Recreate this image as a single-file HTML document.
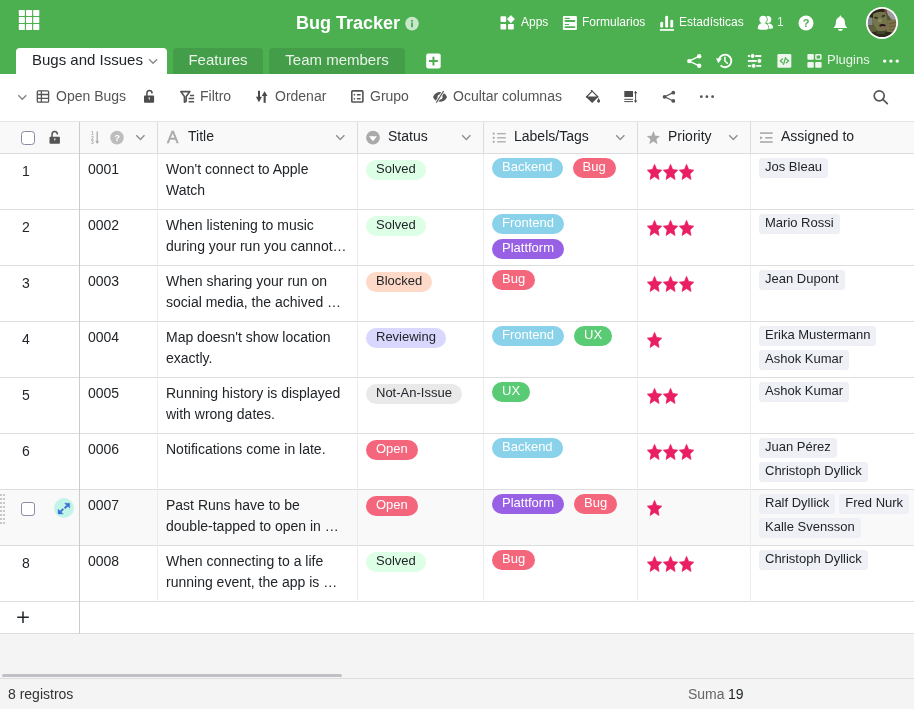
<!DOCTYPE html>
<html lang="es"><head><meta charset="utf-8"><title>Bug Tracker</title>
<style>
*{box-sizing:border-box;margin:0;padding:0}
html,body{width:914px;height:709px;overflow:hidden;background:#fff}
body{font-family:"Liberation Sans",Arial,sans-serif;color:#212529;font-size:14px;position:relative;will-change:transform}
.abs{position:absolute}
#hdr{position:absolute;left:0;top:0;width:914px;height:74px;background:#4caf50;color:#fff}
#hdr .t{position:absolute;white-space:nowrap;color:#fff}
#title{font-weight:bold;font-size:18px;left:296px;top:13px;line-height:21px}
.nav{font-size:12px;line-height:14px;top:15px}
.tab{position:absolute;top:48px;height:26px;border-radius:4px 4px 0 0;font-size:15px;line-height:17px;padding-top:3px;white-space:nowrap}
.tab.on{background:#fff;color:#212529;left:16px;width:151px;padding-left:16px}
.tab.off{background:#449d48;color:rgba(255,255,255,.88);text-align:center}
#tb{position:absolute;left:0;top:74px;width:914px;height:47px;background:#fff}
#tb .t{position:absolute;top:14px;font-size:14px;line-height:16px;color:#555;white-space:nowrap}
svg{position:absolute;overflow:visible}
svg.ov{left:0;top:0;pointer-events:none}
#grid{position:absolute;left:0;top:121px;width:914px;height:557px;background:#f4f4f4}
#gh{position:absolute;left:0;top:0;width:914px;height:33px;background:#f9f9f9;border-top:1px solid #e4e6e9;border-bottom:1px solid #ddd}
.hl{position:absolute;top:6px;font-size:14px;line-height:16px;color:#212529;white-space:nowrap}
.row{position:absolute;left:0;width:914px;height:56px;background:#fff;border-bottom:1px solid #ddd}
.row.hov{background:#f9f9f9}
.vl{position:absolute;width:1px;background:linear-gradient(#dcdcdc 0 32px,#ececec 32px)}
.num{position:absolute;left:22px;top:9px;font-size:14px;line-height:16px}
.id{position:absolute;left:88px;top:5px;font-size:14px;line-height:21px}
.ti{position:absolute;left:166px;top:5px;width:184px;font-size:14px;line-height:21px;white-space:nowrap}
.pill{display:inline-block;height:20px;border-radius:10px;font-size:13px;line-height:19px;padding:0 10px;white-space:nowrap;color:#fff;vertical-align:top}
.st{position:absolute;left:366px;top:6px;color:#212529;line-height:17px}
.lb{margin-right:10px;line-height:17px}
.ln{position:absolute;white-space:nowrap;height:20px;font-size:0}
.chip{display:inline-block;height:20px;border-radius:3px;background:#eef0f5;font-size:13px;line-height:18px;padding:0 6px;margin-right:4px;white-space:nowrap;color:#212529;vertical-align:top}
.star{fill:#e91e63;stroke:#e91e63;stroke-width:.8;stroke-linejoin:round}
.cb{position:absolute;width:14px;height:14px;border:1px solid #8a8ea6;border-radius:3px;background:#fff}
.exp{position:absolute;left:54px;top:8px;width:20px;height:20px;border-radius:10px;background:#c2f4e8}
.drag{position:absolute;left:0;top:4px;width:5px;height:30px;background:linear-gradient(#c8c8c8,#c8c8c8) 0 0/2px 100% no-repeat,linear-gradient(#c8c8c8,#c8c8c8) 3px 0/2px 100% no-repeat;-webkit-mask:repeating-linear-gradient(#000 0 2px,transparent 2px 4px);mask:repeating-linear-gradient(#000 0 2px,transparent 2px 4px)}
#add{position:absolute;left:0;top:481px;width:914px;height:32px;background:#fff;border-bottom:1px solid #ddd}
#sb{position:absolute;left:2px;top:553px;width:340px;height:3px;border-radius:2px;background:#bfc1c4}
#ft{position:absolute;left:0;top:678px;width:914px;height:31px;background:#f4f4f4;border-top:1px solid #ddd;font-size:14px}
</style></head><body>
<div id="hdr">
<div class="t" id="title">Bug Tracker</div>
<div class="t nav" style="left:521px">Apps</div>
<div class="t nav" style="left:582px">Formularios</div>
<div class="t nav" style="left:679px">Estadísticas</div>
<div class="t nav" style="left:777px;color:rgba(255,255,255,.85)">1</div>
<div class="tab on">Bugs and Issues</div>
<div class="tab off" style="left:173px;width:90px">Features</div>
<div class="tab off" style="left:269px;width:136px">Team members</div>
<div class="t" style="left:827px;top:52px;font-size:13px;line-height:15px;color:rgba(255,255,255,.88)">Plugins</div>
<svg class="ov" width="914" height="74" viewBox="0 0 914 74">
<g fill="#fff">
<rect x="18.8" y="9.9" width="6.1" height="6" rx=".7"/><rect x="26" y="9.9" width="6.1" height="6" rx=".7"/><rect x="33.2" y="9.9" width="6.1" height="6" rx=".7"/>
<rect x="18.8" y="17" width="6.1" height="6" rx=".7"/><rect x="26" y="17" width="6.1" height="6" rx=".7"/><rect x="33.2" y="17" width="6.1" height="6" rx=".7"/>
<rect x="18.8" y="24.1" width="6.1" height="6" rx=".7"/><rect x="26" y="24.1" width="6.1" height="6" rx=".7"/><rect x="33.2" y="24.1" width="6.1" height="6" rx=".7"/>
</g>
<circle cx="412" cy="23.6" r="6.8" fill="rgba(255,255,255,.7)"/>
<rect x="411" y="20" width="2" height="1.7" fill="#4caf50"/><rect x="411" y="22.6" width="2" height="4.6" fill="#4caf50"/>
<g fill="#fff">
<rect x="500.5" y="16.2" width="5.7" height="5.7" rx=".8"/><rect x="500.5" y="23.9" width="5.7" height="5.6" rx=".8"/><rect x="508" y="23.9" width="5.8" height="5.6" rx=".8"/>
<path d="M510.9 15.4 L514.5 19.1 L510.9 22.9 L507.3 19.1 Z" stroke="#fff" stroke-width=".6" stroke-linejoin="round"/>
<rect x="562.9" y="16" width="14" height="14" rx="1"/>
</g>
<g stroke="#4caf50" stroke-linecap="round" fill="none">
<path d="M565.2 18.4 H569.2" stroke-width="1.1"/><path d="M565.4 21 H574.4" stroke-width="1.8"/>
<path d="M565.2 24.5 H568.6" stroke-width="1"/><path d="M565.4 27.1 H574.4" stroke-width="1.9"/>
</g>
<g stroke="#fff" stroke-linecap="round" stroke-width="2.9" fill="none">
<path d="M661.7 23.2 V26.2"/><path d="M666.65 17.3 V26.2"/><path d="M671.75 21.1 V26.2"/>
</g>
<rect x="659.9" y="29.1" width="14.1" height="1.7" fill="#fff"/>
<g fill="#fff">
<circle cx="767.8" cy="19.4" r="3.5"/>
<path d="M766 29 V27 C766 25 767 23.6 768.6 23.6 C771.2 23.6 773.2 25.3 773.2 28.2 Q771 29.2 766 29 Z"/>
<circle cx="763.1" cy="19.4" r="4.6" fill="#4caf50"/>
<path d="M757 30.4 C756.6 25 759 22.3 763.1 22.3 C767.2 22.3 769.6 25 769.2 30.4 Z" fill="#4caf50"/>
<circle cx="763.1" cy="19.4" r="3.7"/>
<path d="M757.7 28.9 C757.7 25.2 759.8 23.1 763.1 23.1 C766.4 23.1 768.5 25.2 768.5 28.9 Q763.1 30.6 757.7 28.9 Z"/>
<circle cx="806" cy="22.95" r="7.5"/>
</g>
<text x="806.1" y="27.1" text-anchor="middle" font-family="Liberation Sans, Arial, sans-serif" font-weight="bold" font-size="11" fill="#4caf50">?</text>
<g fill="#fff">
<path d="M839.5 16.5 a.9 .9 0 0 1 1.8 0 v.4 C843.6 17.6 844.9 19.7 844.9 22.3 C844.9 24.9 845.6 26.2 847 27.4 V28 H833.8 V27.4 C835.2 26.2 835.9 24.9 835.9 22.3 C835.9 19.7 837.2 17.6 839.5 16.9 Z"/>
<path d="M838 28.9 H842.8 A2.4 2.1 0 0 1 838 28.9 Z"/>
<circle cx="882" cy="22.9" r="16"/>
</g>
<clipPath id="avc"><circle cx="882" cy="22.9" r="14.2"/></clipPath>
<filter id="bl" x="-30%" y="-30%" width="160%" height="160%"><feGaussianBlur stdDeviation=".6"/></filter>
<g clip-path="url(#avc)"><g filter="url(#bl)">
<rect x="862" y="3" width="40" height="40" fill="#55563a"/>
<path d="M885 6 H900 V21 L892 20 L888 15 Z" fill="#9c9c9f"/>
<path d="M864 15 L872.5 15 L872.5 25 L864 27 Z" fill="#85868a"/>
<path d="M869 17 Q872 9 886 8.5 L886.5 11.5 Q877 11.5 873 18 Z" fill="#2a241e"/>
<path d="M884.3 9 L886.6 9 L887.2 16 L885 15 Z" fill="#7a4a40"/>
<path d="M873 14 Q879 10.5 885.5 12.5 L888 22 L886.5 30 Q880 34 875 29 L872.8 22 Z" fill="#74744b"/>
<ellipse cx="880" cy="20.5" rx="2.2" ry="2" fill="#8a8a5e"/>
<ellipse cx="876" cy="17.8" rx="2" ry="1" fill="#37331f" transform="rotate(12 876 17.8)"/><ellipse cx="883.4" cy="16" rx="1.9" ry="1" fill="#37331f" transform="rotate(-20 883.4 16)"/>
<ellipse cx="882.5" cy="25.6" rx="3.1" ry="1.5" fill="#1f1514"/><ellipse cx="882.7" cy="27" rx="2.4" ry=".9" fill="#94605e"/>
<path d="M888 20.5 Q893 18.5 898 21 V34 L888 34 L886.5 29 Z" fill="#7b7149"/>
<path d="M889 24 L897 22 M889 27 L897 25.5 M889.5 30 L896 29" stroke="#5a5434" stroke-width=".8" fill="none"/>
<path d="M866 26 Q872 23.5 876 28 L879 34 H866 Z" fill="#5d5f3c"/>
<path d="M866 33 Q882 30 898 33.5 V40 H866 Z" fill="#2d2c1c"/>
<path d="M876 30 Q881 33 886 30 L885 34 H877 Z" fill="#45452c"/>
</g></g>
<g fill="#fff" stroke="#fff">
<path d="M689.1 61.1 L699.3 56.2 M689.1 61.1 L699.3 65.8" stroke-width="1.3" fill="none"/>
<circle cx="689.3" cy="61.1" r="2.2" stroke="none"/><circle cx="699.2" cy="56.3" r="2.2" stroke="none"/><circle cx="699.2" cy="65.8" r="2.2" stroke="none"/>
</g>
<g fill="none" stroke="#fff" stroke-width="1.9">
<path d="M719.1 58.9 A6.3 6.3 0 1 1 720.6 65.4"/>
<path d="M724.9 57.2 V61 L727.3 63.2" stroke-width="1.5" stroke-linecap="round"/>
</g>
<path d="M716 58.2 L721.9 58.6 L718.3 63.2 Z" fill="#fff"/>
<g stroke="#fff" stroke-width="1.9" fill="none">
<path d="M747.9 56 H751 M754 56 H761.3"/><path d="M747.9 60.95 H758"/><path d="M747.9 65.9 H752 M755 65.9 H761.3"/>
</g>
<g fill="#fff" stroke="#4caf50" stroke-width=".9"><circle cx="752.6" cy="56" r="2.4"/><circle cx="759.4" cy="60.95" r="2.4"/><circle cx="753.6" cy="65.9" r="2.4"/></g>
<rect x="777.4" y="54" width="13.9" height="13.8" rx="1.3" fill="rgba(255,255,255,.9)"/>
<g fill="none" stroke="#4caf50" stroke-width="1.2" stroke-linecap="round" stroke-linejoin="round">
<path d="M782.5 59 L780.2 60.9 L782.5 62.8"/><path d="M785.5 57.6 L783.6 64.4"/><path d="M786.4 59 L788.7 60.9 L786.4 62.8"/>
</g>
<g fill="rgba(255,255,255,.9)">
<rect x="807.4" y="54" width="6.4" height="5.8" rx="1"/><rect x="807.4" y="62" width="6.4" height="5.8" rx="1"/><rect x="815.2" y="62" width="6.4" height="5.8" rx="1"/>
<rect x="815.9" y="54.7" width="5" height="4.4" rx=".5" fill="none" stroke="rgba(255,255,255,.9)" stroke-width="1.4"/>
</g>
<g fill="#fff"><circle cx="884.7" cy="61.1" r="1.7"/><circle cx="890.9" cy="61.1" r="1.7"/><circle cx="897.2" cy="61.1" r="1.7"/></g>
<path d="M149.1 59.3 L153.1 63.3 L157.1 59.3" fill="none" stroke="#8a8a8a" stroke-width="1.4"/>
<rect x="426.2" y="53.6" width="14.5" height="15" rx="2" fill="#fff"/>
<path d="M433.45 56.7 V65.5 M429 61.1 H437.9" stroke="#4caf50" stroke-width="2" fill="none"/>

</svg>
</div>
<div id="tb">
<div class="t" style="left:56px">Open Bugs</div>
<div class="t" style="left:200px">Filtro</div>
<div class="t" style="left:275px">Ordenar</div>
<div class="t" style="left:370px">Grupo</div>
<div class="t" style="left:453px">Ocultar columnas</div>
<svg class="ov" width="914" height="47" viewBox="0 74 914 47">
<path d="M18.3 95.3 L22.3 99.3 L26.3 95.3" fill="none" stroke="#858585" stroke-width="1.45"/>
<g fill="none" stroke="#555" stroke-width="1.3">
<rect x="37.3" y="90.8" width="11.3" height="11.4" rx="1"/>
<path d="M37.3 94.5 H48.6 M37.3 98.4 H48.6 M41.4 90.8 V102.2"/>
</g>
<g fill="#4d4d4d">
<rect x="144" y="95.6" width="10.1" height="7.2" rx=".8"/>
<path d="M146.9 96 V93.4 A2.6 2.8 0 0 1 152.1 93.4" fill="none" stroke="#4d4d4d" stroke-width="1.5"/>
<path d="M148.4 97.6 H150 L149.3 100.2 Z" fill="#fff"/>
</g>
<g fill="none" stroke="#555" stroke-width="1.6" stroke-linejoin="round">
<path d="M180.8 91.6 H189.9 L186.2 96.4 V101.3 L184.4 102.2 V96.4 Z"/>
<path d="M190 95.5 H194.1 M188.6 98.5 H194.1 M188.6 101.7 H194.1" stroke-width="1.5"/>
</g>
<g fill="#4a4a4a">
<rect x="258" y="90.8" width="2" height="7"/><path d="M255.9 96.8 H262 L258.95 102.2 Z"/>
<rect x="263.6" y="95.4" width="2.1" height="7.4"/><path d="M261.7 96.1 H267.5 L264.6 91.3 Z"/>
</g>
<g fill="none" stroke="#555">
<rect x="351.8" y="90.9" width="11.1" height="11.1" rx=".8" stroke-width="1.6"/>
<path d="M356.9 94.7 H360.6 M356.9 98.8 H360.6" stroke-width="1.5"/>
</g>
<circle cx="354.4" cy="94.7" r=".85" fill="#555"/><circle cx="354.4" cy="98.8" r=".85" fill="#555"/>
<path d="M433 96.9 C435.8 90.4 444.2 90.4 447 96.9 C444.2 103.4 435.8 103.4 433 96.9 Z" fill="#555"/>
<circle cx="440" cy="96.9" r="2.5" fill="#fff"/>
<path d="M443.6 91 L436.3 102.6" stroke="#fff" stroke-width="2.8" fill="none"/>
<path d="M443.6 91 L436.3 102.6" stroke="#555" stroke-width="1.1" fill="none"/>
<g fill="#4d4d4d">
<path d="M586.4 97 L592.2 91.2 L598 97 Z" fill="none" stroke="#4d4d4d" stroke-width="1.2" stroke-linejoin="round"/>
<path d="M586 97 H598.3 L592.2 103.1 Z"/>
<path d="M592.6 91.6 L591 90.1" stroke="#4d4d4d" stroke-width="1.2" fill="none"/>
<path d="M598.6 98 C599.6 99.6 600 100.5 600 101.3 A1.4 1.4 0 0 1 597.2 101.3 C597.2 100.5 597.6 99.6 598.6 98 Z"/>
<rect x="624.3" y="91" width="8.7" height="6"/>
<rect x="624.3" y="98.8" width="8.7" height="1"/><rect x="624.3" y="101.1" width="8.7" height="1"/>
<rect x="635.1" y="92" width="1" height="9.8"/>
<path d="M633.9 93.3 L635.6 90.7 L637.3 93.3 Z M633.9 100.5 L635.6 103.1 L637.3 100.5 Z"/>
</g>
<g fill="#555" stroke="#555">
<path d="M664.5 96.8 L673.3 92.6 M664.5 96.8 L673.3 101" stroke-width="1.2" fill="none"/>
<circle cx="664.6" cy="96.8" r="1.9" stroke="none"/><circle cx="673.3" cy="92.7" r="1.9" stroke="none"/><circle cx="673.3" cy="100.9" r="1.9" stroke="none"/>
</g>
<g fill="#555"><circle cx="701.3" cy="96.7" r="1.4"/><circle cx="706.9" cy="96.7" r="1.4"/><circle cx="712.6" cy="96.7" r="1.4"/></g>
<circle cx="879.2" cy="95.8" r="5" fill="none" stroke="#555" stroke-width="1.7"/>
<path d="M882.8 99.4 L887.3 103.6" stroke="#555" stroke-width="1.7" stroke-linecap="round"/>

</svg>
</div>
<div id="grid">
<div id="gh">
<div class="hl" style="left:188px">Title</div>
<div class="hl" style="left:388px">Status</div>
<div class="hl" style="left:514px">Labels/Tags</div>
<div class="hl" style="left:668px">Priority</div>
<div class="hl" style="left:781px">Assigned to</div>
<div class="hl" style="left:167px;top:6px;font-size:17px;line-height:19px;color:#aaa;-webkit-text-stroke:.5px #aaa">A</div>
</div>
<div class="row" style="top:33px"><div class="num">1</div><div class="id">0001</div><div class="ti">Won't connect to Apple<br>Watch</div><div class="pill st" style="background:#ddffe6;color:#212529">Solved</div><div class="ln" style="left:492px;top:4px"><span class="pill lb" style="background:#89d2ea">Backend</span><span class="pill lb" style="background:#f4667c">Bug</span></div><svg class="star" style="left:646.6px;top:10.4px" width="15.1" height="15.8" viewBox="0 0 15.1 15.8"><path d="M7.55 0.40 L9.63 5.54 L14.70 6.13 L10.91 9.90 L11.97 15.40 L7.55 12.59 L3.13 15.40 L4.19 9.90 L0.40 6.13 L5.47 5.54 Z"/></svg><svg class="star" style="left:662.7px;top:10.4px" width="15.1" height="15.8" viewBox="0 0 15.1 15.8"><path d="M7.55 0.40 L9.63 5.54 L14.70 6.13 L10.91 9.90 L11.97 15.40 L7.55 12.59 L3.13 15.40 L4.19 9.90 L0.40 6.13 L5.47 5.54 Z"/></svg><svg class="star" style="left:678.8px;top:10.4px" width="15.1" height="15.8" viewBox="0 0 15.1 15.8"><path d="M7.55 0.40 L9.63 5.54 L14.70 6.13 L10.91 9.90 L11.97 15.40 L7.55 12.59 L3.13 15.40 L4.19 9.90 L0.40 6.13 L5.47 5.54 Z"/></svg><div class="ln" style="left:759px;top:4px"><span class="chip">Jos Bleau</span></div></div>
<div class="row" style="top:89px"><div class="num">2</div><div class="id">0002</div><div class="ti">When listening to music<br>during your run you cannot…</div><div class="pill st" style="background:#ddffe6;color:#212529">Solved</div><div class="ln" style="left:492px;top:4px"><span class="pill lb" style="background:#89d2ea">Frontend</span></div><div class="ln" style="left:492px;top:29px"><span class="pill lb" style="background:#9860e5">Plattform</span></div><svg class="star" style="left:646.6px;top:10.4px" width="15.1" height="15.8" viewBox="0 0 15.1 15.8"><path d="M7.55 0.40 L9.63 5.54 L14.70 6.13 L10.91 9.90 L11.97 15.40 L7.55 12.59 L3.13 15.40 L4.19 9.90 L0.40 6.13 L5.47 5.54 Z"/></svg><svg class="star" style="left:662.7px;top:10.4px" width="15.1" height="15.8" viewBox="0 0 15.1 15.8"><path d="M7.55 0.40 L9.63 5.54 L14.70 6.13 L10.91 9.90 L11.97 15.40 L7.55 12.59 L3.13 15.40 L4.19 9.90 L0.40 6.13 L5.47 5.54 Z"/></svg><svg class="star" style="left:678.8px;top:10.4px" width="15.1" height="15.8" viewBox="0 0 15.1 15.8"><path d="M7.55 0.40 L9.63 5.54 L14.70 6.13 L10.91 9.90 L11.97 15.40 L7.55 12.59 L3.13 15.40 L4.19 9.90 L0.40 6.13 L5.47 5.54 Z"/></svg><div class="ln" style="left:759px;top:4px"><span class="chip">Mario Rossi</span></div></div>
<div class="row" style="top:145px"><div class="num">3</div><div class="id">0003</div><div class="ti">When sharing your run on<br>social media, the achived …</div><div class="pill st" style="background:#ffd9c8;color:#212529">Blocked</div><div class="ln" style="left:492px;top:4px"><span class="pill lb" style="background:#f4667c">Bug</span></div><svg class="star" style="left:646.6px;top:10.4px" width="15.1" height="15.8" viewBox="0 0 15.1 15.8"><path d="M7.55 0.40 L9.63 5.54 L14.70 6.13 L10.91 9.90 L11.97 15.40 L7.55 12.59 L3.13 15.40 L4.19 9.90 L0.40 6.13 L5.47 5.54 Z"/></svg><svg class="star" style="left:662.7px;top:10.4px" width="15.1" height="15.8" viewBox="0 0 15.1 15.8"><path d="M7.55 0.40 L9.63 5.54 L14.70 6.13 L10.91 9.90 L11.97 15.40 L7.55 12.59 L3.13 15.40 L4.19 9.90 L0.40 6.13 L5.47 5.54 Z"/></svg><svg class="star" style="left:678.8px;top:10.4px" width="15.1" height="15.8" viewBox="0 0 15.1 15.8"><path d="M7.55 0.40 L9.63 5.54 L14.70 6.13 L10.91 9.90 L11.97 15.40 L7.55 12.59 L3.13 15.40 L4.19 9.90 L0.40 6.13 L5.47 5.54 Z"/></svg><div class="ln" style="left:759px;top:4px"><span class="chip">Jean Dupont</span></div></div>
<div class="row" style="top:201px"><div class="num">4</div><div class="id">0004</div><div class="ti">Map doesn't show location<br>exactly.</div><div class="pill st" style="background:#dad7ff;color:#212529">Reviewing</div><div class="ln" style="left:492px;top:4px"><span class="pill lb" style="background:#89d2ea">Frontend</span><span class="pill lb" style="background:#59cb74">UX</span></div><svg class="star" style="left:646.6px;top:10.4px" width="15.1" height="15.8" viewBox="0 0 15.1 15.8"><path d="M7.55 0.40 L9.63 5.54 L14.70 6.13 L10.91 9.90 L11.97 15.40 L7.55 12.59 L3.13 15.40 L4.19 9.90 L0.40 6.13 L5.47 5.54 Z"/></svg><div class="ln" style="left:759px;top:4px"><span class="chip">Erika Mustermann</span></div><div class="ln" style="left:759px;top:28px"><span class="chip">Ashok Kumar</span></div></div>
<div class="row" style="top:257px"><div class="num">5</div><div class="id">0005</div><div class="ti">Running history is displayed<br>with wrong dates.</div><div class="pill st" style="background:#e9e9e9;color:#212529">Not-An-Issue</div><div class="ln" style="left:492px;top:4px"><span class="pill lb" style="background:#59cb74">UX</span></div><svg class="star" style="left:646.6px;top:10.4px" width="15.1" height="15.8" viewBox="0 0 15.1 15.8"><path d="M7.55 0.40 L9.63 5.54 L14.70 6.13 L10.91 9.90 L11.97 15.40 L7.55 12.59 L3.13 15.40 L4.19 9.90 L0.40 6.13 L5.47 5.54 Z"/></svg><svg class="star" style="left:662.7px;top:10.4px" width="15.1" height="15.8" viewBox="0 0 15.1 15.8"><path d="M7.55 0.40 L9.63 5.54 L14.70 6.13 L10.91 9.90 L11.97 15.40 L7.55 12.59 L3.13 15.40 L4.19 9.90 L0.40 6.13 L5.47 5.54 Z"/></svg><div class="ln" style="left:759px;top:4px"><span class="chip">Ashok Kumar</span></div></div>
<div class="row" style="top:313px"><div class="num">6</div><div class="id">0006</div><div class="ti">Notifications come in late.</div><div class="pill st" style="background:#f4667c;color:#fff">Open</div><div class="ln" style="left:492px;top:4px"><span class="pill lb" style="background:#89d2ea">Backend</span></div><svg class="star" style="left:646.6px;top:10.4px" width="15.1" height="15.8" viewBox="0 0 15.1 15.8"><path d="M7.55 0.40 L9.63 5.54 L14.70 6.13 L10.91 9.90 L11.97 15.40 L7.55 12.59 L3.13 15.40 L4.19 9.90 L0.40 6.13 L5.47 5.54 Z"/></svg><svg class="star" style="left:662.7px;top:10.4px" width="15.1" height="15.8" viewBox="0 0 15.1 15.8"><path d="M7.55 0.40 L9.63 5.54 L14.70 6.13 L10.91 9.90 L11.97 15.40 L7.55 12.59 L3.13 15.40 L4.19 9.90 L0.40 6.13 L5.47 5.54 Z"/></svg><svg class="star" style="left:678.8px;top:10.4px" width="15.1" height="15.8" viewBox="0 0 15.1 15.8"><path d="M7.55 0.40 L9.63 5.54 L14.70 6.13 L10.91 9.90 L11.97 15.40 L7.55 12.59 L3.13 15.40 L4.19 9.90 L0.40 6.13 L5.47 5.54 Z"/></svg><div class="ln" style="left:759px;top:4px"><span class="chip">Juan Pérez</span></div><div class="ln" style="left:759px;top:28px"><span class="chip">Christoph Dyllick</span></div></div>
<div class="row hov" style="top:369px"><div class="drag"></div><div class="cb" style="left:21px;top:12px"></div><div class="exp"><svg width="20" height="20" viewBox="0 0 20 20" style="left:0;top:0"><g fill="#3b6fd4" stroke="#3b6fd4"><path d="M10.6 5.3 H15.7 V10 Z" stroke-width=".4" stroke-linejoin="round"/><path d="M13.4 7.6 L10.6 10.3" stroke-width="1.9" fill="none"/><path d="M4.1 11.2 V15.9 H9.3 Z" stroke-width=".4" stroke-linejoin="round"/><path d="M6.5 13.6 L9.3 10.9" stroke-width="1.9" fill="none"/></g></svg></div><div class="id">0007</div><div class="ti">Past Runs have to be<br>double-tapped to open in …</div><div class="pill st" style="background:#f4667c;color:#fff">Open</div><div class="ln" style="left:492px;top:4px"><span class="pill lb" style="background:#9860e5">Plattform</span><span class="pill lb" style="background:#f4667c">Bug</span></div><svg class="star" style="left:646.6px;top:10.4px" width="15.1" height="15.8" viewBox="0 0 15.1 15.8"><path d="M7.55 0.40 L9.63 5.54 L14.70 6.13 L10.91 9.90 L11.97 15.40 L7.55 12.59 L3.13 15.40 L4.19 9.90 L0.40 6.13 L5.47 5.54 Z"/></svg><div class="ln" style="left:759px;top:4px"><span class="chip">Ralf Dyllick</span><span class="chip">Fred Nurk</span></div><div class="ln" style="left:759px;top:28px"><span class="chip">Kalle Svensson</span></div></div>
<div class="row" style="top:425px"><div class="num">8</div><div class="id">0008</div><div class="ti">When connecting to a life<br>running event, the app is …</div><div class="pill st" style="background:#ddffe6;color:#212529">Solved</div><div class="ln" style="left:492px;top:4px"><span class="pill lb" style="background:#f4667c">Bug</span></div><svg class="star" style="left:646.6px;top:10.4px" width="15.1" height="15.8" viewBox="0 0 15.1 15.8"><path d="M7.55 0.40 L9.63 5.54 L14.70 6.13 L10.91 9.90 L11.97 15.40 L7.55 12.59 L3.13 15.40 L4.19 9.90 L0.40 6.13 L5.47 5.54 Z"/></svg><svg class="star" style="left:662.7px;top:10.4px" width="15.1" height="15.8" viewBox="0 0 15.1 15.8"><path d="M7.55 0.40 L9.63 5.54 L14.70 6.13 L10.91 9.90 L11.97 15.40 L7.55 12.59 L3.13 15.40 L4.19 9.90 L0.40 6.13 L5.47 5.54 Z"/></svg><svg class="star" style="left:678.8px;top:10.4px" width="15.1" height="15.8" viewBox="0 0 15.1 15.8"><path d="M7.55 0.40 L9.63 5.54 L14.70 6.13 L10.91 9.90 L11.97 15.40 L7.55 12.59 L3.13 15.40 L4.19 9.90 L0.40 6.13 L5.47 5.54 Z"/></svg><div class="ln" style="left:759px;top:4px"><span class="chip">Christoph Dyllick</span></div></div>
<div id="add"></div>
<div class="vl" style="left:79px;top:1px;height:512px;background:#ccc"></div>
<div class="vl" style="left:157px;top:1px;height:480px"></div>
<div class="vl" style="left:357px;top:1px;height:480px"></div>
<div class="vl" style="left:483px;top:1px;height:480px"></div>
<div class="vl" style="left:637px;top:1px;height:480px"></div>
<div class="vl" style="left:750px;top:1px;height:480px"></div>
<div id="sb"></div>
<svg class="ov" width="914" height="557" viewBox="0 121 914 557">
<rect x="21.5" y="131.5" width="13" height="13" rx="3" fill="#fff" stroke="#878aa0"/>
<g fill="#555">
<rect x="49.5" y="136.8" width="10.4" height="6.9" rx=".8"/>
<path d="M52 137 V134.4 A2.7 2.8 0 0 1 57.4 134.4" fill="none" stroke="#555" stroke-width="1.5"/>
<path d="M54 138.6 H55.6 L54.9 141.2 Z" fill="#fff"/>
</g>
<g fill="#aaa" font-family="Liberation Sans, Arial, sans-serif" font-size="5" font-weight="bold">
<text x="91" y="135.2">1</text><text x="91" y="139.5">2</text><text x="91" y="143.8">3</text>
</g>
<path d="M97.2 131.6 V142.6" stroke="#aaa" stroke-width="1.3" fill="none"/><path d="M95.3 141 L97.2 144 L99.1 141 Z" fill="#aaa"/>
<circle cx="117" cy="137.6" r="6.8" fill="#bdbdbd"/>
<text x="117.05" y="141.2" text-anchor="middle" font-family="Liberation Sans, Arial, sans-serif" font-weight="bold" font-size="9.5" fill="#fff">?</text>
<g fill="none" stroke="#909090" stroke-width="1.45">
<path d="M136.3 135.3 L140.4 139.4 L144.5 135.3"/>
<path d="M336.2 135.3 L340.3 139.4 L344.4 135.3"/>
<path d="M462.2 135.3 L466.3 139.4 L470.4 135.3"/>
<path d="M616.2 135.3 L620.3 139.4 L624.4 135.3"/>
<path d="M729.2 135.3 L733.3 139.4 L737.4 135.3"/>
</g>
<circle cx="373" cy="137.7" r="6.85" fill="#aaa"/><path d="M369 136.2 H377 L373 141.2 Z" fill="#fff"/>
<g fill="#aaa">
<circle cx="493.7" cy="133.7" r="1.1"/><circle cx="493.7" cy="137.8" r="1.1"/><circle cx="493.7" cy="141.8" r="1.1"/>
<rect x="497.1" y="133.05" width="8.7" height="1.3"/><rect x="497.1" y="137.15" width="8.7" height="1.3"/><rect x="497.1" y="141.15" width="8.7" height="1.3"/>
<path d="M653.4 131 L655.3 135.7 L660 136.1 L656.4 139.3 L657.5 144.2 L653.4 141.6 L649.3 144.2 L650.4 139.3 L646.8 136.1 L651.5 135.7 Z"/>
<rect x="760" y="132.3" width="12.7" height="1.6"/><rect x="760" y="141.2" width="12.7" height="1.6"/><rect x="765.2" y="137" width="7.2" height="1.6"/>
<path d="M760 136.2 L763 137.8 L760 139.4 Z"/>
</g>
<path d="M17.2 617.2 H28.8 M23 611.4 V623" stroke="#212529" stroke-width="1.5" fill="none"/>

</svg>
</div>
<div id="ft">
<div class="abs" style="left:8px;top:7px;line-height:16px;color:#333">8 registros</div>
<div class="abs" style="left:688px;top:7px;line-height:16px;color:#666;white-space:nowrap">Suma <span style="color:#212529;margin-left:-.6px">19</span></div>
</div>
</body></html>
